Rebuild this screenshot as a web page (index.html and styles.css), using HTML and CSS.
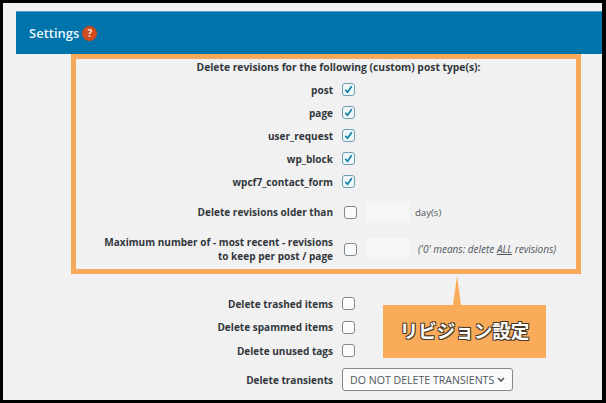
FILE: index.html
```html
<!DOCTYPE html>
<html lang="ja">
<head>
  <meta charset="UTF-8" />
  <meta name="viewport" content="width=device-width, initial-scale=1.0" />
  <title>Settings</title>
  <link rel="stylesheet" href="styles.css">
</head>
<body>
  <div class="frame">
    <header class="panel-head">
      <h2>Settings</h2>
      <span class="help">?</span>
    </header>

    <section class="revisions">
      <p class="revisions-title">Delete revisions for the following (custom) post type(s):</p>
      <div class="row"><span class="label">post</span><span class="check on"><svg viewBox="0 0 12 12"><path d="M2.5 6.5 5 9l4.5-6.5"/></svg></span></div>
      <div class="row"><span class="label">page</span><span class="check on"><svg viewBox="0 0 12 12"><path d="M2.5 6.5 5 9l4.5-6.5"/></svg></span></div>
      <div class="row"><span class="label">user_request</span><span class="check on"><svg viewBox="0 0 12 12"><path d="M2.5 6.5 5 9l4.5-6.5"/></svg></span></div>
      <div class="row"><span class="label">wp_block</span><span class="check on"><svg viewBox="0 0 12 12"><path d="M2.5 6.5 5 9l4.5-6.5"/></svg></span></div>
      <div class="row"><span class="label">wpcf7_contact_form</span><span class="check on"><svg viewBox="0 0 12 12"><path d="M2.5 6.5 5 9l4.5-6.5"/></svg></span></div>
      <div class="row row-older">
        <span class="label">Delete revisions older than</span>
        <span class="check shifted"></span>
        <span class="num"></span>
        <span class="unit">day(s)</span>
      </div>
      <div class="row row-max">
        <span class="label">Maximum number of - most recent - revisions<br>to keep per post / page</span>
        <span class="check shifted"></span>
        <span class="num"></span>
        <span class="note">('0' means: delete <u>ALL</u> revisions)</span>
      </div>
    </section>

    <section class="others">
      <div class="row"><span class="label">Delete trashed items</span><span class="check"></span></div>
      <div class="row"><span class="label">Delete spammed items</span><span class="check"></span></div>
      <div class="row"><span class="label">Delete unused tags</span><span class="check"></span></div>
      <div class="row row-select">
        <span class="label">Delete transients</span>
        <span class="select">DO NOT DELETE TRANSIENTS<svg viewBox="0 0 8 5"><path d="M1 1l3 3 3-3"/></svg></span>
      </div>
    </section>

    <div class="callout">リビジョン設定</div>
  </div>
</body>
</html>
```

FILE: styles.css
```css
* {
  box-sizing: border-box;
  margin: 0;
  padding: 0;
}

body {
  width: 606px;
  height: 403px;
  overflow: hidden;
  font-family: "Open Sans", "Noto Sans", sans-serif;
  color: #32373c;
}

.frame {
  position: relative;
  width: 606px;
  height: 403px;
  padding-top: 8px;
  background: #f1f1f1;
  border-style: solid;
  border-color: #000;
  border-width: 3px 4px 3px 3px;
  overflow: hidden;
}

.panel-head {
  height: 43px;
  margin-left: 13px;
  padding-left: 13px;
  display: flex;
  align-items: center;
  gap: 3px;
  background: #0073aa;
  border-top: 1px solid #4fa3c9;
  color: #fff;
}

.panel-head h2 {
  font-size: 13px;
  font-weight: 600;
  color: #e6f6fb;
}

.help {
  width: 15px;
  height: 15px;
  border-radius: 50%;
  background: #cf4a1c;
  color: #fbe3d4;
  font-size: 10px;
  font-weight: 700;
  line-height: 15px;
  text-align: center;
}

.revisions {
  width: 510px;
  height: 220px;
  margin-left: 68px;
  border: 5px solid #f6a95a;
  display: flex;
  flex-direction: column;
}

.revisions-title {
  height: 16px;
  font-size: 10.3px;
  font-weight: 700;
  line-height: 16px;
  text-align: center;
  padding-left: 25px;
}

.row {
  height: 23px;
  display: flex;
  align-items: center;
  font-size: 10.05px;
  font-weight: 700;
}

.label {
  flex: none;
  width: 257px;
  line-height: 14px;
  text-align: right;
}

.revisions .row:nth-child(2) {
  margin-top: 3px;
}

.check {
  flex: none;
  width: 13px;
  height: 13px;
  margin-left: 9px;
  background: #fbfbfb;
  border: 1px solid #7e8993;
  border-radius: 3px;
}

.check svg {
  display: block;
  width: 11px;
  height: 11px;
  fill: none;
  stroke: #0f7fa8;
  stroke-width: 1.8;
}

.check.on {
  background: #eef6f8;
  border-color: #6f9fb0;
}

.check.shifted {
  margin-left: 11px;
}

.num {
  flex: none;
  width: 42px;
  height: 22px;
  margin-left: 10px;
  background: #f6f6f6;
}

.row-older {
  height: 22px;
  margin-top: 8px;
}

.row-max {
  height: 28px;
  margin-top: 12px;
}

.unit {
  margin-left: 6px;
  font-size: 9.6px;
  font-weight: 400;
  color: #50575e;
}

.note {
  margin-left: 9px;
  font-size: 10px;
  font-weight: 400;
  font-style: italic;
  color: #50575e;
}

.others {
  margin-top: 18px;
  margin-left: 73px;
}

.others .row {
  height: 23.5px;
}

.others .row-select {
  height: 24px;
  margin-top: 5px;
}

.select {
  flex: none;
  width: 171px;
  height: 23px;
  margin-left: 9px;
  padding: 0 7px;
  display: flex;
  align-items: center;
  justify-content: space-between;
  background: #fbfbfb;
  border: 1px solid #7e8993;
  border-radius: 3px;
  font-size: 10.6px;
  font-weight: 400;
  color: #50575e;
  white-space: nowrap;
}

.select svg {
  flex: none;
  width: 8px;
  height: 5px;
  fill: none;
  stroke: #50575e;
  stroke-width: 1.6;
}

.callout {
  position: absolute;
  left: 380px;
  top: 302px;
  width: 163px;
  height: 53px;
  background: #f9ab5a;
  color: #fff;
  font-family: "Noto Sans CJK JP", sans-serif;
  font-size: 18.5px;
  font-weight: 700;
  line-height: 50px;
  text-align: center;
  text-shadow: -1px -1px 0 #4a3a28, 1px -1px 0 #4a3a28, -1px 1px 0 #4a3a28, 1px 1px 0 #4a3a28;
}

.callout::before {
  content: "";
  position: absolute;
  left: 70px;
  top: -29px;
  border-style: solid;
  border-width: 0 4.5px 29px;
  border-color: transparent transparent #f9ab5a;
}
```
